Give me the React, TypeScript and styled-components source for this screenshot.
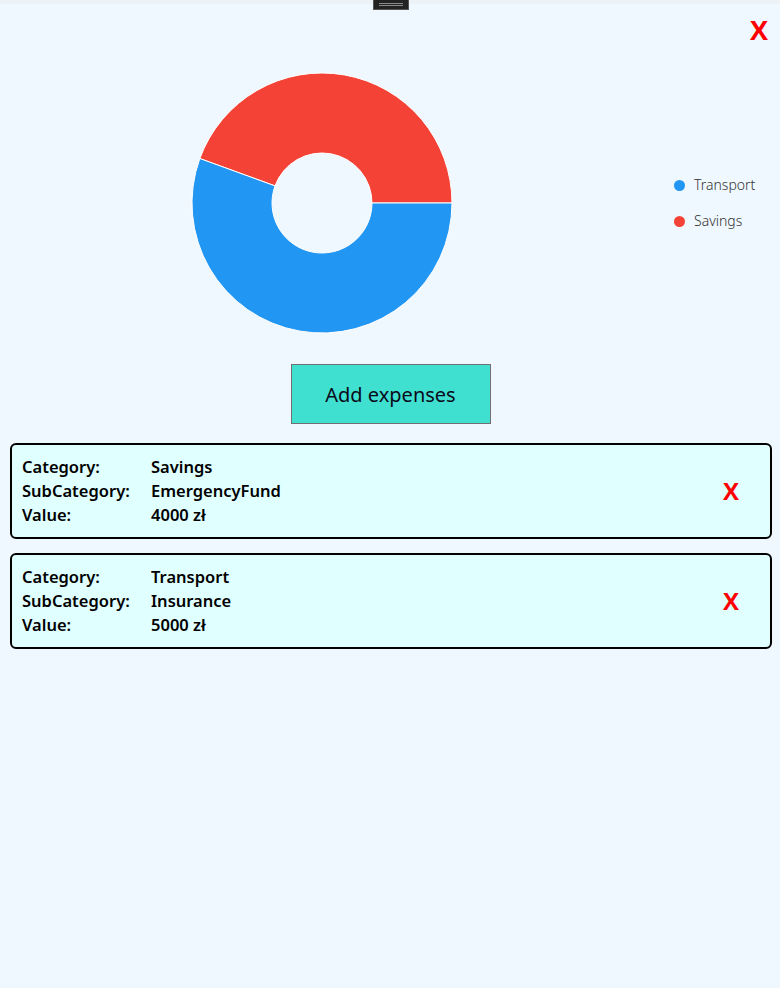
import { FunctionComponent } from 'react';
import styled, { createGlobalStyle } from 'styled-components';

type Expense = {
  category: string;
  subCategory: string;
  value: number;
};

const expenses: Expense[] = [
  { category: 'Savings', subCategory: 'EmergencyFund', value: 4000 },
  { category: 'Transport', subCategory: 'Insurance', value: 5000 },
];

const slices = [
  { name: 'Savings', value: 4000, color: '#f44336' },
  { name: 'Transport', value: 5000, color: '#2196f3' },
];

const legend = [
  { name: 'Transport', color: '#2196f3' },
  { name: 'Savings', color: '#f44336' },
];

const GlobalStyle = createGlobalStyle`
  html, body {
    margin: 0;
    padding: 0;
    background-color: #f0f8ff;
  }

  body {
    font-family: 'Noto Sans', 'Open Sans', sans-serif;
    color: #000;
  }

  * {
    box-sizing: border-box;
  }
`;

const StyledPage = styled.div`
  position: relative;
  width: 100%;
  min-height: 988px;
  display: flex;
  flex-direction: column;
`;

const StyledTopStrip = styled.div`
  height: 4px;
  background-color: #edf2f7;
`;

const StyledHandle = styled.div`
  position: absolute;
  top: 0;
  left: 373px;
  width: 36px;
  height: 10px;
  background-color: #232323;
  border: 1px solid #555;
  border-top: none;
  display: flex;
  flex-direction: column;
  align-items: center;
  justify-content: center;
  gap: 1px;

  & > span {
    width: 24px;
    height: 1px;
    background-color: #8a8a8a;
  }
`;

const StyledCloseRow = styled.div`
  display: flex;
  justify-content: flex-end;
  padding: 12px 12px 0 0;
  height: 68px;
`;

const StyledCloseBtn = styled.button<{ $size: number }>`
  background: transparent;
  border: none;
  padding: 0;
  cursor: pointer;
  color: #ff0000;
  font-family: 'Open Sans', 'Noto Sans', sans-serif;
  font-weight: 700;
  font-size: ${({ $size }) => $size}px;
  line-height: 1;
  height: fit-content;
`;

const StyledChartRow = styled.div`
  display: flex;
  align-items: center;
`;

const StyledChart = styled.svg`
  margin-left: 191px;
  display: block;
`;

const StyledLegend = styled.ul`
  list-style: none;
  margin: 0 0 0 221px;
  padding: 0;
  display: flex;
  flex-direction: column;
  gap: 14px;
`;

const StyledLegendItem = styled.li`
  display: flex;
  align-items: center;
  gap: 9px;
  font-family: 'Noto Sans', sans-serif;
  font-size: 14px;
  font-weight: 300;
  line-height: 22px;
  color: #333;
`;

const StyledDot = styled.span<{ $color: string }>`
  width: 11px;
  height: 11px;
  border-radius: 50%;
  background-color: ${({ $color }) => $color};
`;

const StyledButtonRow = styled.div`
  display: flex;
  justify-content: center;
  padding: 30px 0 19px 1px;
`;

const StyledAddBtn = styled.button`
  width: 200px;
  height: 60px;
  background-color: #40e0d0;
  border: 1px solid #707070;
  font-family: 'Noto Sans', sans-serif;
  font-size: 20px;
  color: #0a0a1a;
  cursor: pointer;
`;

const StyledList = styled.div`
  display: flex;
  flex-direction: column;
  gap: 14px;
  padding: 0 8px 0 10px;
`;

const StyledCard = styled.div`
  height: 96px;
  display: flex;
  align-items: center;
  justify-content: space-between;
  padding: 0 31px 0 10px;
  background-color: #e0ffff;
  border: 2px solid #000;
  border-radius: 6px;
`;

const StyledInfo = styled.div`
  display: grid;
  grid-template-columns: 129px auto;
  font-family: 'Noto Sans', sans-serif;
  font-size: 16.5px;
  font-weight: 600;
  line-height: 24px;
`;

const polar = (cx: number, cy: number, r: number, deg: number) => {
  const rad = (deg * Math.PI) / 180;
  return [cx + r * Math.cos(rad), cy - r * Math.sin(rad)];
};

const sectorPath = (a0: number, a1: number, outer: number, inner: number) => {
  const c = outer + 1;
  const large = a1 - a0 > 180 ? 1 : 0;
  const [x0, y0] = polar(c, c, outer, a0);
  const [x1, y1] = polar(c, c, outer, a1);
  const [x2, y2] = polar(c, c, inner, a1);
  const [x3, y3] = polar(c, c, inner, a0);
  return `M${x0} ${y0} A${outer} ${outer} 0 ${large} 0 ${x1} ${y1} L${x2} ${y2} A${inner} ${inner} 0 ${large} 1 ${x3} ${y3} Z`;
};

const Donut: FunctionComponent = () => {
  const total = slices.reduce((sum, s) => sum + s.value, 0);
  let start = 0;

  return (
    <StyledChart width={262} height={262} viewBox='0 0 262 262'>
      {slices.map((s) => {
        const end = start + (s.value / total) * 360;
        const d = sectorPath(start, end, 130, 50);
        start = end;
        return <path key={s.name} d={d} fill={s.color} stroke='#fff' strokeWidth={1} />;
      })}
    </StyledChart>
  );
};

export default function App() {
  return (
    <StyledPage>
      <GlobalStyle />
      <StyledTopStrip />
      <StyledHandle>
        <span />
        <span />
      </StyledHandle>

      <StyledCloseRow>
        <StyledCloseBtn $size={27}>X</StyledCloseBtn>
      </StyledCloseRow>

      <StyledChartRow>
        <Donut />
        <StyledLegend>
          {legend.map((l) => (
            <StyledLegendItem key={l.name}>
              <StyledDot $color={l.color} />
              {l.name}
            </StyledLegendItem>
          ))}
        </StyledLegend>
      </StyledChartRow>

      <StyledButtonRow>
        <StyledAddBtn>Add expenses</StyledAddBtn>
      </StyledButtonRow>

      <StyledList>
        {expenses.map((e) => (
          <StyledCard key={e.category}>
            <StyledInfo>
              <span>Category:</span>
              <span>{e.category}</span>
              <span>SubCategory:</span>
              <span>{e.subCategory}</span>
              <span>Value:</span>
              <span>{e.value} zł</span>
            </StyledInfo>
            <StyledCloseBtn $size={24}>X</StyledCloseBtn>
          </StyledCard>
        ))}
      </StyledList>
    </StyledPage>
  );
}
